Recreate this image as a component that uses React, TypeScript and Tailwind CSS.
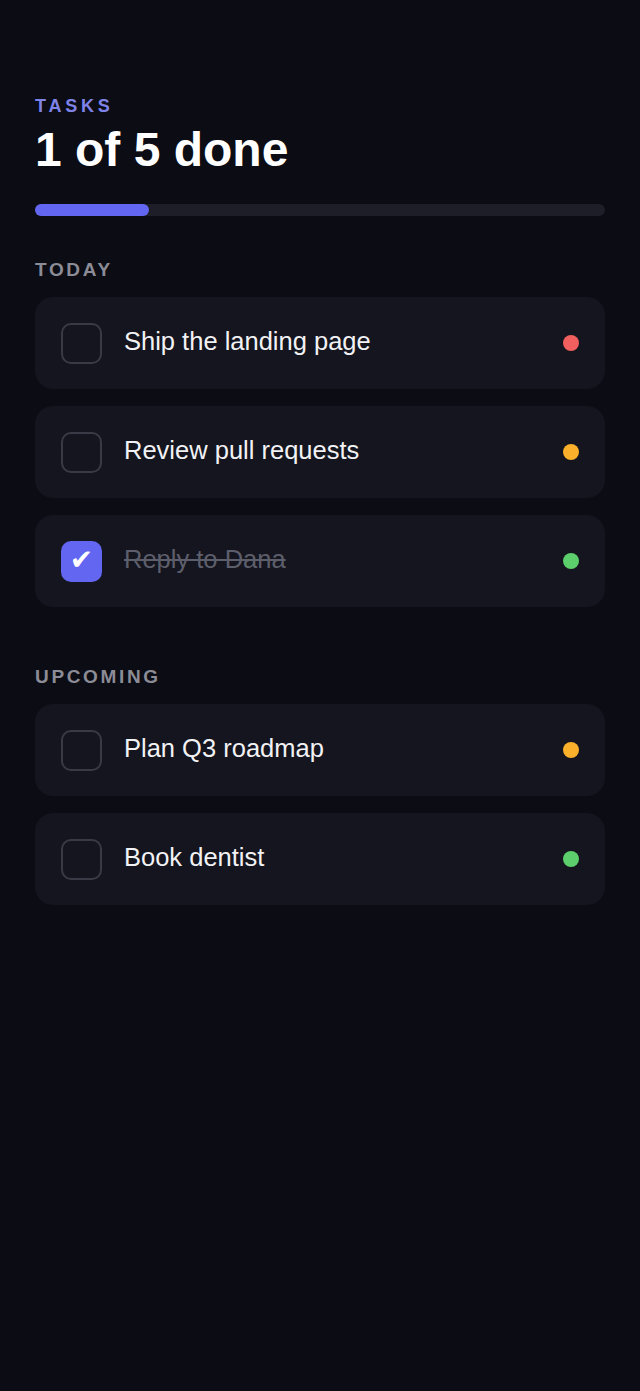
import React from "react";

type Task = { title: string; done: boolean; color: string };

const today: Task[] = [
  { title: "Ship the landing page", done: false, color: "bg-[#f25f5f]" },
  { title: "Review pull requests", done: false, color: "bg-[#fbb02b]" },
  { title: "Reply to Dana", done: true, color: "bg-[#5ccf6c]" },
];

const upcoming: Task[] = [
  { title: "Plan Q3 roadmap", done: false, color: "bg-[#fbb02b]" },
  { title: "Book dentist", done: false, color: "bg-[#5ccf6c]" },
];

function TaskRow({ task }: { task: Task }) {
  return (
    <div className="flex h-[92px] items-center rounded-[18px] bg-[#14151e] px-[26px]">
      {task.done ? (
        <div className="flex h-[41px] w-[41px] shrink-0 items-center justify-center rounded-[10px] bg-[#6366f1]">
          <span
            className="pb-[3px] text-[28px] leading-none text-white"
            style={{ fontFamily: '"DejaVu Sans", sans-serif' }}
          >
            ✔
          </span>
        </div>
      ) : (
        <div className="h-[41px] w-[41px] shrink-0 rounded-[10px] border-2 border-[#393a46]" />
      )}
      <span
        className={
          "ml-[22px] flex-1 pb-[4px] text-[25.5px] leading-[30px] " +
          (task.done ? "text-[#5d5e6b] line-through decoration-[#5d5e6b]" : "text-[#f2f2f5]")
        }
      >
        {task.title}
      </span>
      <span className={"h-4 w-4 shrink-0 rounded-full " + task.color} />
    </div>
  );
}

function Section({ label, tasks }: { label: string; tasks: Task[] }) {
  return (
    <div>
      <div className="text-[19px] font-bold leading-[24px] tracking-[0.14em] text-[#8c8c97]">
        {label}
      </div>
      <div className="mt-[15px] flex flex-col gap-[17px]">
        {tasks.map((t) => (
          <TaskRow key={t.title} task={t} />
        ))}
      </div>
    </div>
  );
}

export default function App() {
  return (
    <div
      className="min-h-[1391px] w-full bg-[#0b0c14] px-[35px] pt-[94px]"
      style={{ fontFamily: '"Liberation Sans", Arial, sans-serif' }}
    >
      <div className="text-[18px] font-bold leading-[24px] tracking-[0.21em] text-[#7f83e8]">
        TASKS
      </div>
      <h1 className="mt-1 text-[48px] font-bold leading-[56px] text-white">1 of 5 done</h1>
      <div className="mt-[26px] h-[12px] w-full rounded-full bg-[#1d1e28]">
        <div className="h-full rounded-full bg-[#6366f1]" style={{ width: "20%" }} />
      </div>
      <div className="mt-[42px]">
        <Section label="TODAY" tasks={today} />
      </div>
      <div className="mt-[58px]">
        <Section label="UPCOMING" tasks={upcoming} />
      </div>
    </div>
  );
}
